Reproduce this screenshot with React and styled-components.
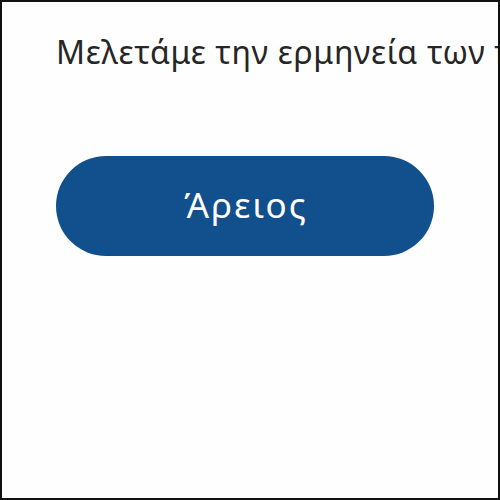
import React from 'react';
import styled, { createGlobalStyle } from 'styled-components';

const GlobalStyle = createGlobalStyle`
  html, body {
    margin: 0;
    padding: 0;
    background: #fff;
  }
  * {
    box-sizing: border-box;
  }
`;

const Frame = styled.div`
  width: 500px;
  height: 500px;
  border: 2px solid #111;
  overflow: hidden;
  background: #fefefe;
  display: flex;
  flex-direction: column;
  padding: 28px 0 0 54px;
  font-family: 'Noto Sans', 'DejaVu Sans', sans-serif;
`;

const Title = styled.p`
  margin: 0;
  white-space: nowrap;
  font-size: 32px;
  line-height: 44px;
  letter-spacing: 0.65px;
  color: #262626;
`;

const Choice = styled.button`
  margin-top: 82px;
  width: 378px;
  height: 100px;
  border: none;
  border-radius: 50px;
  background: #11508c;
  color: #fff;
  font-family: inherit;
  font-size: 35px;
  letter-spacing: 2px;
  cursor: pointer;
  display: flex;
  align-items: center;
  justify-content: center;
  padding: 0 0 4px 2px;
`;

export default function App() {
  return (
    <>
      <GlobalStyle />
      <Frame>
        <Title>Μελετάμε την ερμηνεία των πλανητών</Title>
        <Choice>Άρειος</Choice>
      </Frame>
    </>
  );
}
